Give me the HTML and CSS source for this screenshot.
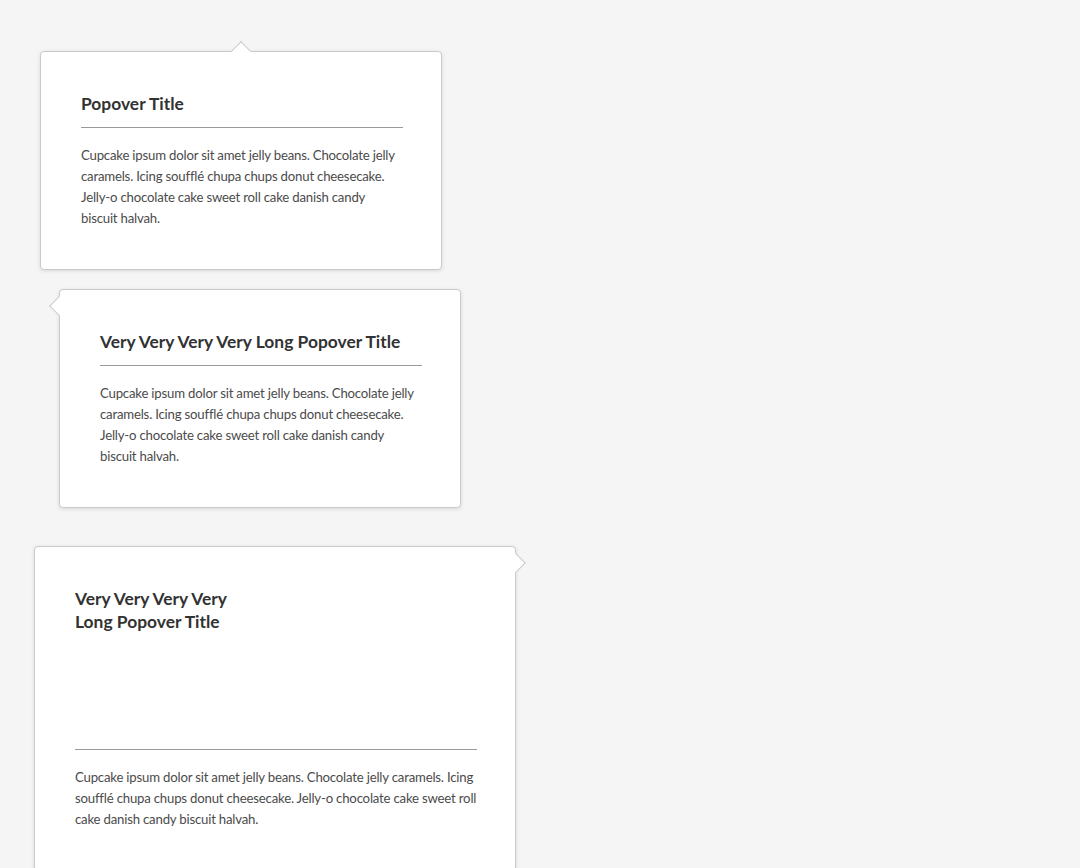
FILE: index.html
```html
<!DOCTYPE html>
<html lang="en">
<head>
<meta charset="utf-8">
<title>Popovers</title>
<link rel="stylesheet" href="styles.css">
</head>
<body>
<main class="page">
  <section class="popover popover-w402 popover-tip-top popover-first">
    <span class="tip"></span>
    <header class="popover-header">
      <h2 class="popover-title">Popover Title</h2>
    </header>
    <p class="popover-body">Cupcake ipsum dolor sit amet jelly beans. Chocolate jelly caramels. Icing soufflé chupa chups donut cheesecake. Jelly-o chocolate cake sweet roll cake danish candy biscuit halvah.</p>
  </section>

  <section class="popover popover-w402 popover-tip-left popover-second">
    <span class="tip"></span>
    <header class="popover-header">
      <h2 class="popover-title">Very Very Very Very Long Popover Title</h2>
    </header>
    <p class="popover-body">Cupcake ipsum dolor sit amet jelly beans. Chocolate jelly caramels. Icing soufflé chupa chups donut cheesecake. Jelly-o chocolate cake sweet roll cake danish candy biscuit halvah.</p>
  </section>

  <section class="popover popover-w482 popover-tip-right popover-third">
    <span class="tip"></span>
    <header class="popover-header popover-header-tall">
      <h2 class="popover-title">Very Very Very Very<br>Long Popover Title</h2>
    </header>
    <p class="popover-body">Cupcake ipsum dolor sit amet jelly beans. Chocolate jelly caramels. Icing soufflé chupa chups donut cheesecake. Jelly-o chocolate cake sweet roll cake danish candy biscuit halvah.</p>
  </section>
</main>
</body>
</html>
```

FILE: styles.css
```css
* { box-sizing: border-box; }

html, body {
  margin: 0;
  padding: 0;
  background: #f5f5f5;
  height: 100%;
  overflow: hidden;
}

body {
  font-family: Lato, "Open Sans", sans-serif;
  color: #4b4b4b;
}

.page {
  display: flex;
  flex-direction: column;
  align-items: flex-start;
  padding-top: 51px;
}

.popover {
  position: relative;
  background: #ffffff;
  border: 1px solid #cacaca;
  border-radius: 4px;
  box-shadow: 0 1px 4px rgba(0, 0, 0, 0.12);
  padding: 40px 38px 40px 40px;
}

.popover-w402 { width: 402px; }
.popover-w482 { width: 482px; }

.popover-first { margin-left: 40px; }
.popover-second { margin-left: 59px; margin-top: 19px; }
.popover-third { margin-left: 34px; margin-top: 38px; }

.popover-header {
  border-bottom: 1px solid #9a9a9a;
  padding-bottom: 12px;
}

.popover-header-tall {
  min-height: 163px;
}

.popover-title {
  margin: 0;
  font-size: 17.4px;
  line-height: 23px;
  font-weight: 700;
  color: #323232;
}

.popover-body {
  margin: 17px 0 0;
  font-size: 13.2px;
  line-height: 21px;
  color: #4b4b4b;
  letter-spacing: -0.2px;
}

.tip {
  position: absolute;
  width: 14px;
  height: 14px;
  background: #ffffff;
  border: 1px solid #cacaca;
  transform: rotate(45deg);
}

.popover-tip-top .tip {
  top: -8px;
  left: 50%;
  margin-left: -7px;
  border-right: none;
  border-bottom: none;
}

.popover-tip-left .tip {
  left: -8px;
  top: 9px;
  border-top: none;
  border-right: none;
}

.popover-tip-right .tip {
  right: -8px;
  top: 9px;
  border-left: none;
  border-bottom: none;
}
```
